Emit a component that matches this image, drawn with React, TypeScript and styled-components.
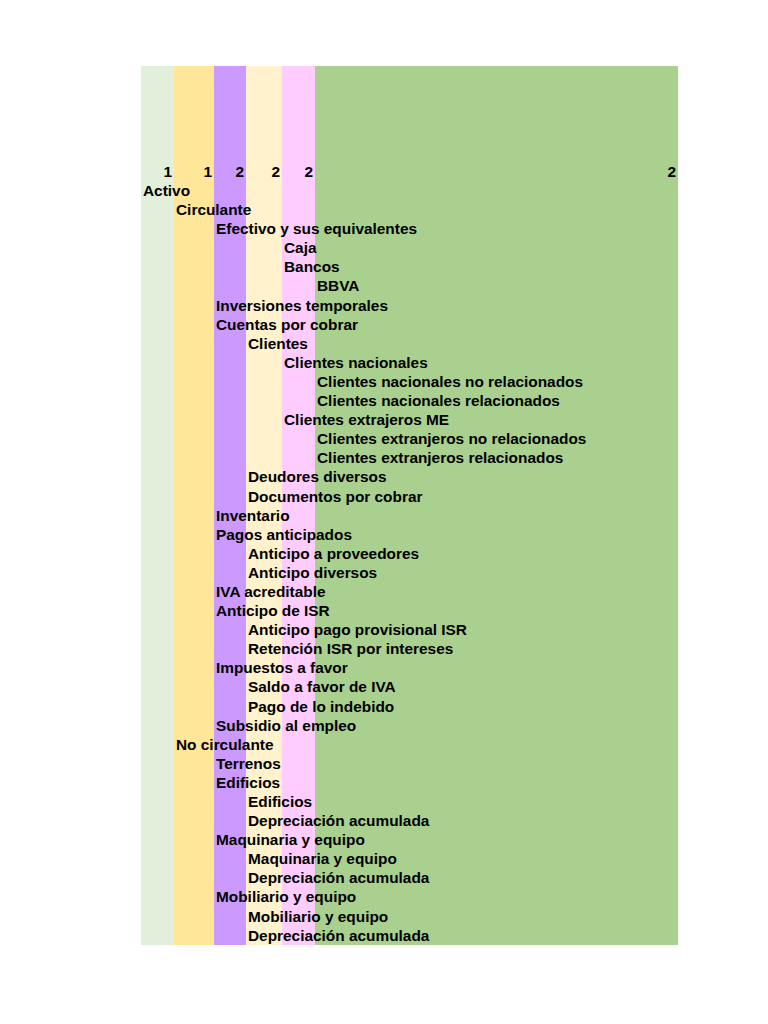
import React from "react";
import styled, { createGlobalStyle } from "styled-components";

const Global = createGlobalStyle`
  html, body { margin: 0; padding: 0; background: #ffffff; }
  body { font-family: "Liberation Sans", Arial, sans-serif; }
`;

const COLS = [
  { w: 33, c: "#e2efda" },
  { w: 40, c: "#ffe699" },
  { w: 32, c: "#cc99ff" },
  { w: 36, c: "#fff2cc" },
  { w: 33, c: "#ffccff" },
  { w: 363, c: "#a9d08e" },
];

const offsets = COLS.reduce<number[]>((acc, col, i) => {
  acc.push(i === 0 ? 0 : acc[i - 1] + COLS[i - 1].w);
  return acc;
}, []);

const stops = COLS.map((col, i) => `${col.c} ${offsets[i]}px ${offsets[i] + col.w}px`).join(", ");

const Page = styled.div`
  padding: 66px 0 79px 141px;
`;

const Sheet = styled.div`
  width: 537px;
  background: linear-gradient(to right, ${stops});
  font-family: "Liberation Sans", Arial, sans-serif;
  font-weight: 700;
  font-size: 15.4px;
  color: #000;
`;

const HeaderRow = styled.div`
  display: grid;
  grid-template-columns: ${COLS.map((c) => c.w + "px").join(" ")};
  height: 115px;
  align-items: end;
`;

const NumCell = styled.div`
  text-align: right;
  padding-right: 2px;
  line-height: 19.1px;
  height: 19.1px;
`;

const Row = styled.div<{ $indent: number }>`
  height: 19.1px;
  line-height: 19.1px;
  padding-left: ${(p) => p.$indent + 2}px;
  white-space: nowrap;
`;

const rows: [number, string][] = [
  [0, "Activo"],
  [1, "Circulante"],
  [2, "Efectivo y sus equivalentes"],
  [4, "Caja"],
  [4, "Bancos"],
  [5, "BBVA"],
  [2, "Inversiones temporales"],
  [2, "Cuentas por cobrar"],
  [3, "Clientes"],
  [4, "Clientes nacionales"],
  [5, "Clientes nacionales no relacionados"],
  [5, "Clientes nacionales relacionados"],
  [4, "Clientes extrajeros ME"],
  [5, "Clientes extranjeros no relacionados"],
  [5, "Clientes extranjeros relacionados"],
  [3, "Deudores diversos"],
  [3, "Documentos por cobrar"],
  [2, "Inventario"],
  [2, "Pagos anticipados"],
  [3, "Anticipo a proveedores"],
  [3, "Anticipo diversos"],
  [2, "IVA acreditable"],
  [2, "Anticipo de ISR"],
  [3, "Anticipo pago provisional ISR"],
  [3, "Retención ISR por intereses"],
  [2, "Impuestos a favor"],
  [3, "Saldo a favor de IVA"],
  [3, "Pago de lo indebido"],
  [2, "Subsidio al empleo"],
  [1, "No circulante"],
  [2, "Terrenos"],
  [2, "Edificios"],
  [3, "Edificios"],
  [3, "Depreciación acumulada"],
  [2, "Maquinaria y equipo"],
  [3, "Maquinaria y equipo"],
  [3, "Depreciación acumulada"],
  [2, "Mobiliario y equipo"],
  [3, "Mobiliario y equipo"],
  [3, "Depreciación acumulada"],
];

const headerNums = ["1", "1", "2", "2", "2", "2"];

export default function App() {
  return (
    <>
      <Global />
      <Page>
        <Sheet>
          <HeaderRow>
            {headerNums.map((n, i) => (
              <NumCell key={i}>{n}</NumCell>
            ))}
          </HeaderRow>
          {rows.map(([lvl, text], i) => (
            <Row key={i} $indent={offsets[lvl]}>
              {text}
            </Row>
          ))}
        </Sheet>
      </Page>
    </>
  );
}
